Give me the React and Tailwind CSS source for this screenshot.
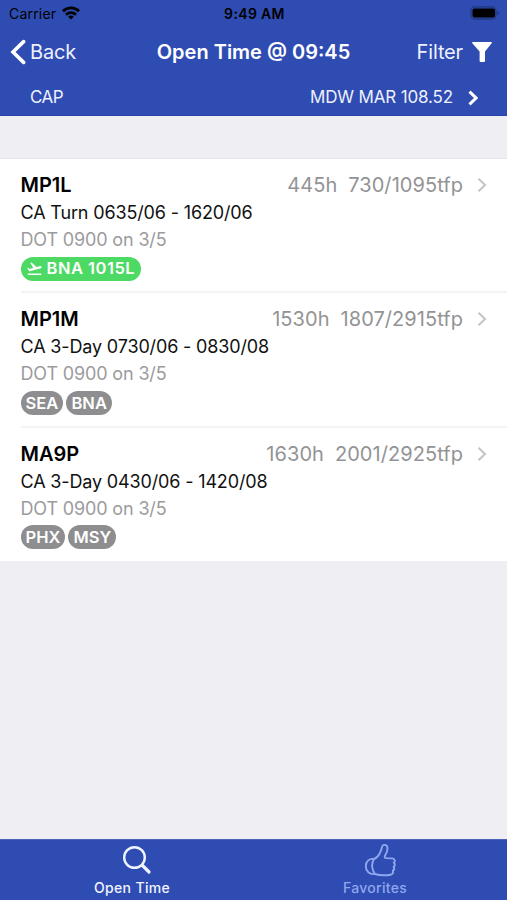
import React from "react";
import { MdFlightTakeoff } from "react-icons/md";

const trips = [
  {
    id: "MP1L",
    credit: "445h",
    pay: "730/1095tfp",
    detail: "CA Turn 0635/06 - 1620/06",
    dot: "DOT 0900 on 3/5",
    departure: "BNA 1015L",
    layovers: [],
  },
  {
    id: "MP1M",
    credit: "1530h",
    pay: "1807/2915tfp",
    detail: "CA 3-Day 0730/06 - 0830/08",
    dot: "DOT 0900 on 3/5",
    layovers: ["SEA", "BNA"],
  },
  {
    id: "MA9P",
    credit: "1630h",
    pay: "2001/2925tfp",
    detail: "CA 3-Day 0430/06 - 1420/08",
    dot: "DOT 0900 on 3/5",
    layovers: ["PHX", "MSY"],
  },
];

function Chevron({ className, strokeWidth = 2.2 }) {
  return (
    <svg viewBox="0 0 10 16" className={className} fill="none" stroke="currentColor" strokeWidth={strokeWidth}>
      <path d="M1.500 1.700 8 8l-6.500 6.300" />
    </svg>
  );
}

function StatusBar() {
  return (
    <div className="grid h-[27px] grid-cols-3 items-center pr-[7px] pl-[9px] text-black">
      <div className="flex items-center gap-[6px]">
        <span className="text-[14px] tracking-[0.2px]">Carrier</span>
        <svg viewBox="0 0 18 14" className="mb-[2px] h-[14px] w-[18px]" fill="none" stroke="currentColor" strokeWidth="2.800">
          <path d="M1 5.200a11.500 11.500 0 0 1 16 0" />
          <path d="M4 8.700a7.200 7.200 0 0 1 10 0" />
          <path d="M9 13.600 6.200 10.800a4 4 0 0 1 5.600 0z" fill="currentColor" stroke="none" />
        </svg>
      </div>
      <span className="text-center text-[14px] font-semibold tracking-[0.35px]">9:49 AM</span>
      <svg viewBox="0 0 30 14" className="mb-px h-[14px] w-[30px] justify-self-end">
        <rect x="1" y="1" width="25" height="12" rx="4" fill="none" stroke="#213982" strokeWidth="1.400" />
        <rect x="2.500" y="2.500" width="22.500" height="9" rx="2" fill="#000" />
        <path d="M27.500 5v4c1-.3 1.600-1 1.600-2s-.6-1.700-1.600-2z" fill="#213982" />
      </svg>
    </div>
  );
}

function Header() {
  return (
    <header className="h-[116px] border-b border-[#2542a4] bg-[#2f4cb2] text-white">
      <StatusBar />
      <div className="flex h-[50px] items-center justify-between pr-[15px] pl-[10px]">
        <div className="flex w-[130px] items-center gap-[4px]">
          <svg viewBox="0 0 16 26" className="h-[26px] w-4" fill="none" stroke="currentColor" strokeWidth="3.600" strokeLinecap="round">
            <path d="M13.600 2.600 3 13l10.600 10.400" />
          </svg>
          <span className="text-[20px] tracking-[-0.2px] text-[#edf1ff]">Back</span>
        </div>
        <h1 className="text-[20px] font-semibold whitespace-nowrap">Open Time @ 09:45</h1>
        <div className="flex w-[125px] items-center justify-end gap-[9px]">
          <span className="text-[20px] tracking-[-0.15px] text-[#edf1ff]">Filter</span>
          <svg viewBox="0 0 20 20" className="h-5 w-5" fill="currentColor">
            <path d="M.8 0h18.400q1.200 0 .5 1.200L13 9.500V19q0 1-1 1H8.600q-1 0-1-1V9.500L.3 1.200Q-.4 0 .8 0z" />
          </svg>
        </div>
      </div>
      <div className="flex h-[41px] items-center justify-between pr-[29px] pl-[30px] text-[17px] text-[#edf1ff]">
        <span className="tracking-[-0.5px]">CAP</span>
        <div className="flex items-center gap-[15px]">
          <span className="tracking-[-0.15px]">MDW MAR 108.52</span>
          <Chevron className="h-4 w-[10px] text-white" strokeWidth={3} />
        </div>
      </div>
    </header>
  );
}

function TripRow({ trip }) {
  return (
    <li className="ml-[20.5px] h-[134.4px] border-b-2 border-[#f4f4f5] pt-[12px] pr-[20px] last:h-[133px] last:border-b-0">
      <div className="flex h-7 items-center justify-between text-[20px]">
        <span className="font-semibold text-black">{trip.id}</span>
        <div className="flex items-center text-[#939395]">
          <span className="mr-[11px] tracking-[0.05px]">{trip.credit}</span>
          <span className="mr-[14px] tracking-[0.05px]">{trip.pay}</span>
          <Chevron className="h-4 w-[10px] text-[#c7c7ca]" />
        </div>
      </div>
      <div className="flex h-[27px] items-center text-[18px] tracking-[-0.15px] text-[#111]">{trip.detail}</div>
      <div className="flex h-[27px] items-center text-[18px] tracking-[-0.15px] text-[#9b9b9d]">{trip.dot}</div>
      <div className="mt-[3.5px] flex gap-[3px] text-[16.5px] font-semibold text-white">
        {trip.departure && (
          <span className="flex h-6 items-center gap-[4px] rounded-full bg-[#4cd964] pr-[6px] pl-[5px]">
            <MdFlightTakeoff className="h-[17px] w-[17px]" />
            <span className="tracking-[0.5px]">{trip.departure}</span>
          </span>
        )}
        {trip.layovers.map((city) => (
          <span key={city} className="flex h-6 items-center rounded-full bg-[#8e8e90] px-[5px] tracking-[0.05px]">
            {city}
          </span>
        ))}
      </div>
    </li>
  );
}

function TabBar() {
  return (
    <nav className="flex h-[61px] justify-center border-t border-[#4a62b8] bg-[#2f4cb2] text-[14px] font-medium">
      <div className="flex w-[243px] flex-col items-center text-[#f0f4ff]">
        <svg viewBox="0 0 30 30" className="mt-[5px] ml-[10px] h-[30px] w-[30px]" fill="none" stroke="currentColor" strokeLinecap="round">
          <circle cx="12.500" cy="12.500" r="10.300" strokeWidth="2.400" />
          <path d="m20.500 20.500 6.500 6.500" strokeWidth="3.200" />
        </svg>
        <span className="mt-[2px] tracking-[0.35px]">Open Time</span>
      </div>
      <div className="flex w-[243px] flex-col items-center text-[#8fa7ee]">
        <svg viewBox="0 0 33 34" className="mt-[3px] ml-[10px] h-[34px] w-[33px]" fill="none" stroke="currentColor" strokeWidth="1.900" strokeLinecap="round" strokeLinejoin="round">
          <path d="M10 16c2.500-.6 4-2.500 5.500-5.200C17 8.200 17.500 6.500 18.200 3.500c.6-2.300 4.700-2.200 5.200.8.400 2.800-.7 5.600-2.300 8.200-.7 1.400-.2 2.500 1 2.600l6.200.3c2.600.2 3.200 3 1.500 4.400 1.400 1.200 1.300 3-.2 4.100 1.100 1.300.8 2.900-.8 3.800.8 1.700-.2 3.700-2.300 4-5.300.8-11.300.6-15.500-.7-3.200-4-4-10.300-1-15z" />
          <path d="M10 16c-4.500-.9-8.200 2.200-8.200 7.200 0 4.900 3.500 8.500 9.200 7.800" />
        </svg>
        <span className="tracking-[0.3px]">Favorites</span>
      </div>
    </nav>
  );
}

export default function App() {
  return (
    <div className="flex h-[900px] w-[507px] flex-col overflow-hidden bg-[#efeef3] font-[Inter,sans-serif]">
      <Header />
      <main className="flex-1 pt-[42px]">
        <ul className="border-t border-[#e4e4e8] bg-white">
          {trips.map((trip) => (
            <TripRow key={trip.id} trip={trip} />
          ))}
        </ul>
      </main>
      <TabBar />
    </div>
  );
}
